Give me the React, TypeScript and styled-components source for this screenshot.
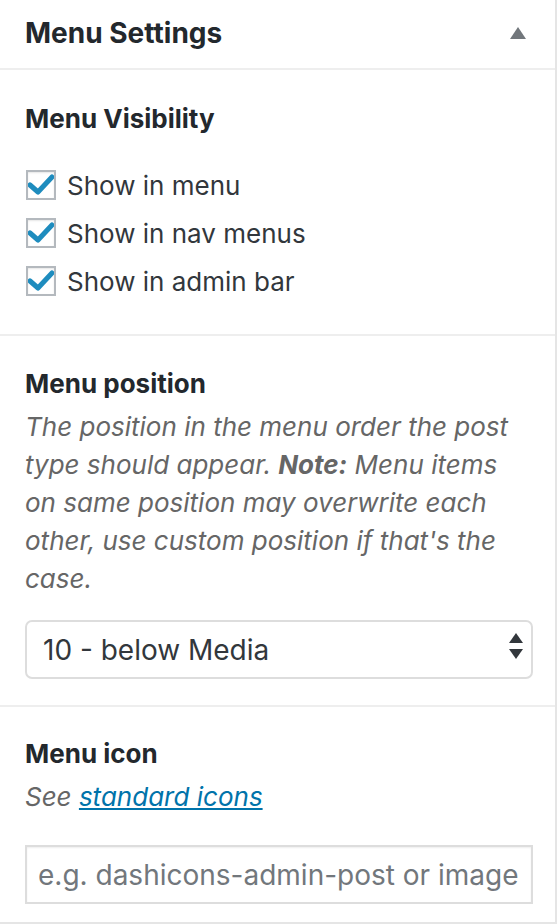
import React from "react";
import styled, { createGlobalStyle } from "styled-components";

const FONT = `Inter, "Liberation Sans", Arial, sans-serif`;

const Global = createGlobalStyle`
  html, body { margin: 0; padding: 0; background: #fff; }
  body { font-family: ${FONT}; }
  * { box-sizing: border-box; }
`;

const Panel = styled.div`
  width: 557px;
  background: #fff;
  border-right: 2px solid #e5e5e5;
  border-bottom: 2px solid #e5e5e5;
`;

const Header = styled.div`
  height: 70px;
  padding: 0 28px 2px 25px;
  display: flex;
  align-items: center;
  justify-content: space-between;
  border-bottom: 2px solid #eee;
`;

const Title = styled.h2`
  margin: 0;
  font-size: 28px;
  font-weight: 700;
  color: #23282d;
  line-height: 36px;
`;

const Toggle = styled.button`
  border: 0;
  background: none;
  padding: 0;
  width: 18px;
  height: 14px;
  display: flex;
  align-items: center;
  justify-content: center;
  color: #72777c;
`;

const Section = styled.div<{ $pt: number; $pb: number; $last?: boolean }>`
  padding: ${(p) => p.$pt}px 25px ${(p) => p.$pb}px 25px;
  border-bottom: ${(p) => (p.$last ? "none" : "2px solid #eee")};
`;

const Heading = styled.h4`
  margin: 0;
  font-size: 26px;
  font-weight: 700;
  color: #23282d;
  line-height: 36px;
`;

const List = styled.div`
  margin-top: 24px;
  display: flex;
  flex-direction: column;
`;

const Row = styled.label`
  height: 48px;
  display: flex;
  align-items: center;
  gap: 11px;
  font-size: 26px;
  color: #32373c;
`;

const Box = styled.span`
  width: 30px;
  height: 30px;
  margin-left: 1px;
  border: 2px solid #b4b9be;
  background: #fff;
  box-shadow: inset 0 1px 2px rgba(0, 0, 0, 0.1);
  display: flex;
  align-items: center;
  justify-content: center;
  flex-shrink: 0;
`;

const Desc = styled.p`
  margin: 6px 0 0;
  font-size: 26px;
  line-height: 38px;
  font-style: italic;
  color: #666;
  strong { font-weight: 700; }
`;

const Link = styled.a`
  color: #0073aa;
  text-decoration: underline;
`;

const SelectWrap = styled.div`
  position: relative;
  margin-top: 22px;
  width: 508px;
`;

const Select = styled.select`
  appearance: none;
  -webkit-appearance: none;
  width: 100%;
  height: 59px;
  border: 2px solid #ddd;
  border-radius: 7px;
  background: #fff;
  padding: 0 40px 0 16px;
  font-family: ${FONT};
  font-size: 28px;
  color: #32373c;
`;

const Arrows = styled.svg`
  position: absolute;
  right: 10px;
  top: 13px;
  pointer-events: none;
`;

const Input = styled.input`
  display: block;
  margin-top: 29px;
  width: 508px;
  height: 59px;
  border: 2px solid #ddd;
  box-shadow: inset 0 1px 2px rgba(0, 0, 0, 0.07);
  padding: 0 11px;
  font-family: ${FONT};
  font-size: 28px;
  color: #32373c;
  &::placeholder { color: #72777c; }
`;

const Check = () => (
  <svg width="26" height="22" viewBox="0 0 26 22">
    <path d="M2 11 L10 18 L24 3" fill="none" stroke="#1e8cbe" strokeWidth="5" strokeLinecap="round" strokeLinejoin="round" />
  </svg>
);

const items = ["Show in menu", "Show in nav menus", "Show in admin bar"];

export default function App() {
  return (
    <>
      <Global />
      <Panel>
        <Header>
          <Title>Menu Settings</Title>
          <Toggle aria-label="Toggle panel">
            <svg width="16" height="12" viewBox="0 0 16 12">
              <path d="M8 0 L16 12 L0 12 Z" fill="currentColor" />
            </svg>
          </Toggle>
        </Header>
        <Section $pt={31} $pb={29}>
          <Heading>Menu Visibility</Heading>
          <List>
            {items.map((t) => (
              <Row key={t}>
                <Box><Check /></Box>
                {t}
              </Row>
            ))}
          </List>
        </Section>
        <Section $pt={30} $pb={26}>
          <Heading>Menu position</Heading>
          <Desc>
            The position in the menu order the post type should appear. <strong>Note:</strong> Menu items on same
            position may overwrite each other, use custom position if that's the case.
          </Desc>
          <SelectWrap>
            <Select defaultValue="10">
              <option value="10">10 - below Media</option>
            </Select>
            <Arrows width="14" height="30" viewBox="0 0 14 30">
              <path d="M7 0 L14 10 L0 10 Z" fill="#32373c" />
              <path d="M0 16 L14 16 L7 26 Z" fill="#32373c" />
            </Arrows>
          </SelectWrap>
        </Section>
        <Section $pt={29} $pb={18} $last>
          <Heading>Menu icon</Heading>
          <Desc>
            See <Link href="#">standard icons</Link>
          </Desc>
          <Input placeholder="e.g. dashicons-admin-post or image" />
        </Section>
      </Panel>
    </>
  );
}
